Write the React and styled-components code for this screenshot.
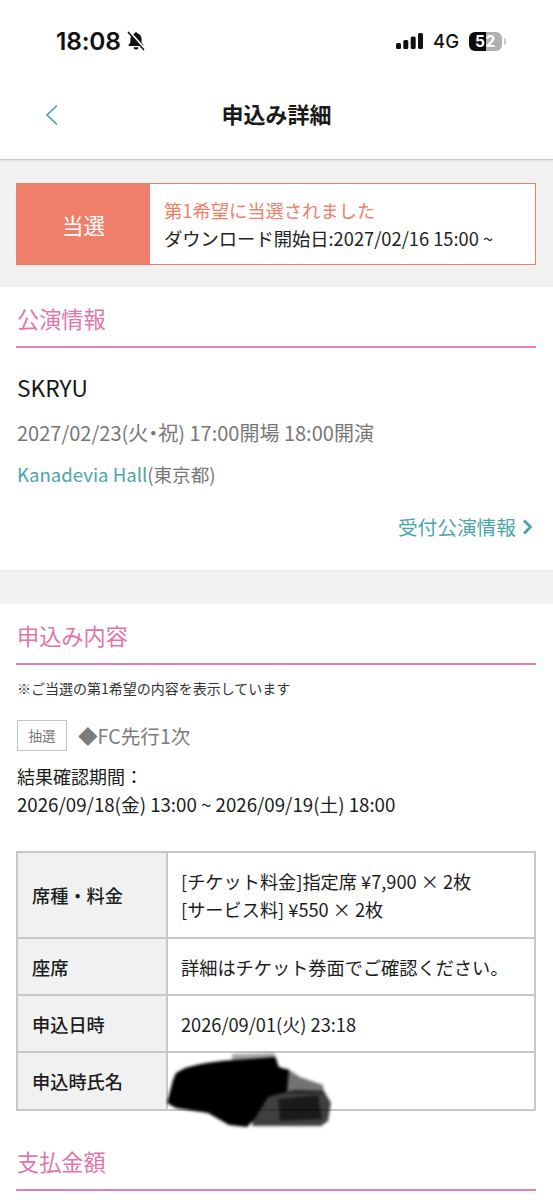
import React from "react";
import styled, { createGlobalStyle } from "styled-components";

const CJK = `"Noto Sans CJK JP", "Noto Sans", sans-serif`;

const Global = createGlobalStyle`
  html, body { margin: 0; padding: 0; background: #fff; }
  * { box-sizing: border-box; }
`;

const Page = styled.div`
  width: 553px;
  height: 1200px;
  overflow: hidden;
  font-family: ${CJK};
  background: #f1f1f1;
  color: #1a1a1a;
`;

const Top = styled.header`
  height: 160px;
  background: #fff;
  border-bottom: 1px solid #c9c9c9;
  box-shadow: 0 1px 2px rgba(0, 0, 0, 0.08);
  position: relative;
`;

const StatusBar = styled.div`
  height: 82px;
  padding: 24px 47px 0 56px;
  display: flex;
  align-items: flex-start;
  justify-content: space-between;
`;

const TimeWrap = styled.div`
  display: flex;
  align-items: center;
  gap: 6px;
  height: 34px;
`;

const Time = styled.span`
  font-family: Inter, sans-serif;
  font-size: 24.5px;
  font-weight: 600;
  letter-spacing: -0.2px;
  color: #111;
`;

const StatusRight = styled.div`
  display: flex;
  align-items: center;
  height: 34px;
`;

const Net = styled.span`
  font-family: Inter, sans-serif;
  font-size: 18.5px;
  font-weight: 500;
  margin: 0 10px;
  color: #111;
`;

const Battery = styled.div`
  width: 33px;
  height: 19px;
  border-radius: 6px;
  background: linear-gradient(90deg, #0a0a0a 0 52%, #b1b1b1 52% 100%);
  color: #fff;
  font-family: Inter, sans-serif;
  font-size: 15.5px;
  font-weight: 700;
  line-height: 19px;
  text-align: center;
  letter-spacing: 0.6px;
`;

const Nub = styled.div`
  width: 2px;
  height: 7px;
  margin-left: 2px;
  border-radius: 0 2px 2px 0;
  background: #c8c8c8;
`;

const NavBar = styled.div`
  height: 66px;
  display: grid;
  grid-template-columns: 100px 1fr 100px;
  align-items: center;
`;

const Back = styled.div`
  display: flex;
  padding-left: 45px;
`;

const Title = styled.h1`
  margin: 0;
  padding-bottom: 4px;
  text-align: center;
  font-size: 22px;
  font-weight: 700;
  line-height: 30px;
  color: #1a1a1a;
`;

const Band = styled.div`
  padding: 23px 17px 22px 16px;
  height: 127px;
`;

const Banner = styled.div`
  display: flex;
  height: 82px;
  border: 1px solid #ee8069;
  background: #fff;
`;

const BannerTag = styled.div`
  width: 133px;
  background: #ef7f6a;
  color: #fff;
  font-size: 21.5px;
  font-weight: 400;
  display: flex;
  align-items: center;
  justify-content: center;
`;

const BannerBody = styled.div`
  padding: 12px 0 0 14px;
  display: flex;
  flex-direction: column;
`;

const BannerHead = styled.div`
  color: #ee8069;
  font-size: 18.3px;
  line-height: 28px;
`;

const BannerText = styled.div`
  color: #222;
  font-size: 18.3px;
  line-height: 28px;
  white-space: nowrap;
`;

const Section = styled.section`
  background: #fff;
  height: ${(p) => p.$h || "auto"};
  border-bottom: ${(p) => (p.$line ? "1px solid #e6e6e6" : "none")};
  margin-bottom: ${(p) => p.$mb || "0"};
`;

const Heading = styled.h2`
  margin: 0 17px 0 16px;
  height: ${(p) => p.$h || "61px"};
  padding: ${(p) => p.$pt || "16px"} 0 0 1px;
  border-bottom: 2px solid #e07fb2;
  color: #e274ab;
  font-size: 22.2px;
  font-weight: 400;
  line-height: 30px;
`;

const Info = styled.div`
  padding: 0 17px 0 17px;
`;

const Artist = styled.div`
  font-size: 22.7px;
  line-height: 30px;
  color: #161616;
  padding-top: 25px;
`;

const DateLine = styled.div`
  font-size: 20px;
  font-feature-settings: "palt";
  line-height: 28px;
  color: #777;
  padding-top: 16px;
  white-space: nowrap;
`;

const Venue = styled.div`
  font-size: 18.6px;
  line-height: 26px;
  padding-top: 14px;
  color: #777;
`;

const Teal = styled.span`
  color: #4ba5a8;
`;

const MoreRow = styled.div`
  display: flex;
  justify-content: flex-end;
  align-items: center;
  gap: 6px;
  padding: 27px 4px 0 0;
  color: #4ba5a8;
  font-size: 19.7px;
  line-height: 26px;
`;

const Note = styled.p`
  margin: 0;
  padding: 13px 17px 0;
  font-size: 14px;
  line-height: 20px;
  color: #333;
`;

const LotRow = styled.div`
  display: flex;
  align-items: center;
  gap: 11px;
  margin: 22px 17px 0;
`;

const LotTag = styled.span`
  width: 50px;
  height: 31px;
  border: 1px solid #c4c4c4;
  font-size: 13.5px;
  line-height: 29px;
  text-align: center;
  color: #777;
`;

const LotName = styled.span`
  font-size: 19.6px;
  color: #7d7d7d;
  line-height: 28px;
`;

const Period = styled.div`
  margin: 11px 17px 0;
  font-size: ${(p) => p.$size}px;
  line-height: 28px;
  color: #1c1c1c;
  white-space: nowrap;
`;

const PeriodDates = styled(Period)`
  margin-top: 0;
`;

const Table = styled.table`
  margin: 33px 17px 0 16px;
  width: 520px;
  table-layout: fixed;
  border-collapse: collapse;
  font-size: 18.2px;
  color: #1c1c1c;
`;

const Th = styled.th`
  width: 150px;
  height: ${(p) => p.$h}px;
  padding: 0 0 0 14px;
  background: #f1f1f1;
  border: 2px solid #c8c8c8;
  font-weight: 500;
  text-align: left;
`;

const Td = styled.td`
  height: ${(p) => p.$h}px;
  padding: 0 0 0 13px;
  border: 2px solid #c8c8c8;
  line-height: 28px;
  position: relative;
  white-space: nowrap;
`;

const Scribble = styled.svg`
  position: absolute;
  left: -2px;
  top: 0;
  overflow: visible;
`;

const BellOff = () => (
  <svg width="18" height="20" viewBox="0 0 19 21" aria-hidden="true">
    <path d="M9.5 1.2c.9 0 1.5.6 1.6 1.4 2.7.7 4.3 3 4.3 6v2.6c0 1.1.9 2 1.8 3 .5.6.2 1.6-.8 1.6H2.6c-1 0-1.3-1-.8-1.6.9-1 1.8-1.9 1.8-3V8.600c0-3 1.600-5.300 4.300-6 .1-.8.7-1.400 1.600-1.400z" fill="#111" />
    <path d="M7 17h5c0 1.500-1.100 2.600-2.500 2.600S7 18.500 7 17z" fill="#111" />
    <path d="M2.500 0.800 18.500 18.800" stroke="#fff" strokeWidth="2.500" />
    <path d="M1.500 1.500 17.500 19.500" stroke="#111" strokeWidth="1.700" strokeLinecap="round" />
  </svg>
);

const Signal = () => (
  <svg width="27" height="16" viewBox="0 0 27 16" aria-hidden="true">
    <rect x="0" y="10" width="5" height="6" rx="1.500" fill="#111" />
    <rect x="7.300" y="7" width="5" height="9" rx="1.500" fill="#111" />
    <rect x="14.700" y="3.500" width="5" height="12.500" rx="1.500" fill="#111" />
    <rect x="22" y="0" width="5" height="16" rx="1.500" fill="#111" />
  </svg>
);

const Redaction = () => (
  <Scribble width="166" height="74" viewBox="0 0 166 74" aria-hidden="true">
    <defs>
      <filter id="soft" x="-10%" y="-10%" width="120%" height="120%">
        <feGaussianBlur stdDeviation="1.800" />
      </filter>
    </defs>
    <g filter="url(#soft)">
      <path d="M66 1 L108 0 L112 8 L66 10 Z" fill="#000" opacity="0.35" />
      <path d="M120 15 L134 24 L157 32 L158 40 L120 40 Z" fill="#000" opacity="0.55" />
      <path d="M100 42 L130 37 L158 38 L165 50 L162 68 L155 73 L86 73 L88 64 Z" fill="#000" opacity="0.75" />
      <path d="M112 46 L152 42 L156 66 L114 68 Z" fill="#000" opacity="0.6" />
      <path d="M10 20 L19 15 C36 10 52 8 67 7 L109 4 L113 14 L123 17 L121 39 L102 44 L88 67 L81 74 L63 72 L42 60 L10 55 L1 50 L7 27 Z" fill="#000" />
    </g>
  </Scribble>
);

export default function App() {
  return (
    <Page>
      <Global />
      <Top>
        <StatusBar>
          <TimeWrap>
            <Time>18:08</Time>
            <BellOff />
          </TimeWrap>
          <StatusRight>
            <Signal />
            <Net>4G</Net>
            <Battery>52</Battery>
            <Nub />
          </StatusRight>
        </StatusBar>
        <NavBar>
          <Back>
            <svg width="14" height="22" viewBox="0 0 14 22" aria-hidden="true">
              <path d="M12 1.500 2 11l10 9.500" fill="none" stroke="#4ba5a8" strokeWidth="1.700" />
            </svg>
          </Back>
          <Title>申込み詳細</Title>
        </NavBar>
      </Top>
      <Band>
        <Banner>
          <BannerTag>当選</BannerTag>
          <BannerBody>
            <BannerHead>第1希望に当選されました</BannerHead>
            <BannerText>ダウンロード開始日:2027/02/16 15:00 ~</BannerText>
          </BannerBody>
        </Banner>
      </Band>
      <Section $h="284px" $line $mb="33px">
        <Heading>公演情報</Heading>
        <Info>
          <Artist>SKRYU</Artist>
          <DateLine>2027/02/23(火・祝) 17:00開場 18:00開演</DateLine>
          <Venue>
            <Teal>Kanadevia Hall</Teal>(東京都)
          </Venue>
          <MoreRow>
            受付公演情報
            <svg width="10" height="16" viewBox="0 0 10 16" aria-hidden="true">
              <path d="M2 1.500 8.500 8 2 14.500" fill="none" stroke="#4ba5a8" strokeWidth="2.800" />
            </svg>
          </MoreRow>
        </Info>
      </Section>
      <Section $h="600px">
        <Heading>申込み内容</Heading>
        <Note>※ご当選の第1希望の内容を表示しています</Note>
        <LotRow>
          <LotTag>抽選</LotTag>
          <LotName>◆FC先行1次</LotName>
        </LotRow>
        <Period $size={18}>結果確認期間：</Period>
        <PeriodDates $size={18.7}>2026/09/18(金) 13:00 ~ 2026/09/19(土) 18:00</PeriodDates>
        <Table>
          <tbody>
            <tr>
              <Th $h={86}>席種・料金</Th>
              <Td $h={86}>
                [チケット料金]指定席 ¥7,900 × 2枚
                <br />
                [サービス料] ¥550 × 2枚
              </Td>
            </tr>
            <tr>
              <Th $h={57}>座席</Th>
              <Td $h={57}>詳細はチケット券面でご確認ください。</Td>
            </tr>
            <tr>
              <Th $h={57}>申込日時</Th>
              <Td $h={57}>2026/09/01(火) 23:18</Td>
            </tr>
            <tr>
              <Th $h={58}>申込時氏名</Th>
              <Td $h={58}>
                <Redaction />
              </Td>
            </tr>
          </tbody>
        </Table>
        <Heading $h="80px" $pt="35px">支払金額</Heading>
      </Section>
    </Page>
  );
}
